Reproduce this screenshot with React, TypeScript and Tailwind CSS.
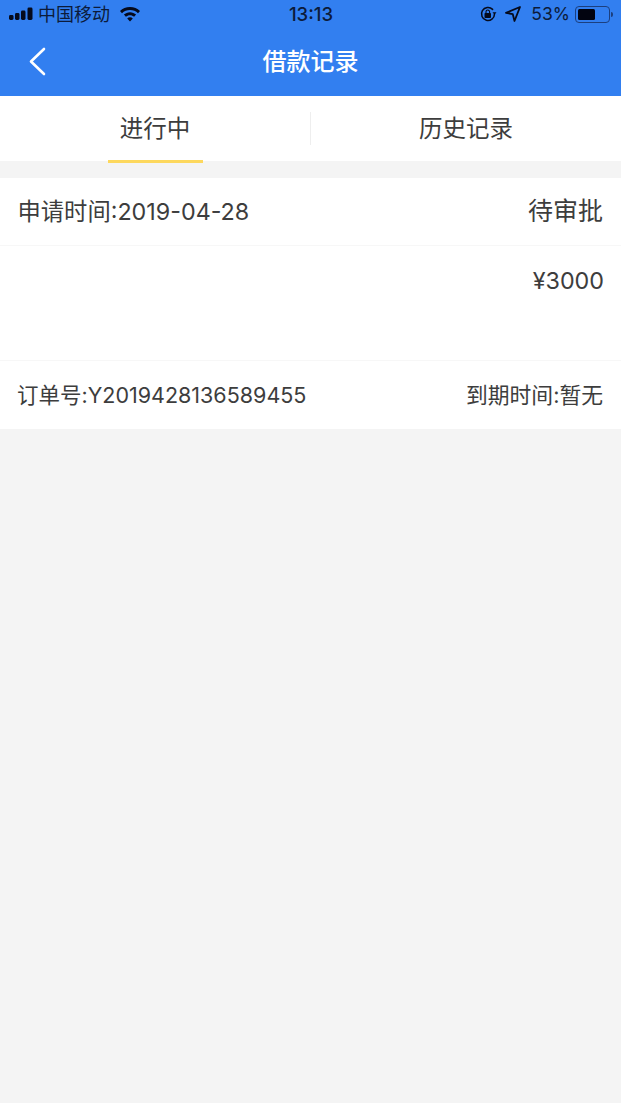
import React from "react";

const font = "font-['Inter','Noto_Sans_CJK_SC',sans-serif]";

function StatusBar() {
  return (
    <div className="flex h-[28px] items-center justify-between pl-[9px] pr-[8px] text-[#0c1b3a]">
      <div className="flex w-[200px] items-center">
        <svg width="25" height="14" viewBox="0 0 25 14" fill="#050a1c">
          <rect x="0" y="8" width="4.500" height="5" rx="1.400" />
          <rect x="6" y="6" width="4.500" height="7" rx="1.400" />
          <rect x="12" y="3.500" width="4.500" height="9.500" rx="1.400" />
          <rect x="18.500" y="0.500" width="5" height="12.500" rx="1.400" />
        </svg>
        <span className="ml-[4px] translate-y-[1px] text-[18px] leading-[20px]">中国移动</span>
        <svg className="ml-[9px]" width="22" height="16" viewBox="0 0 22 16" fill="#050a1c">
          <path d="M11 1C7 1 3.600 2.500 1 5l2 2.200C5.100 5.100 7.900 4 11 4s5.900 1.100 8 3.200L21 5C18.400 2.500 15 1 11 1z" />
          <path d="M11 6.200c-2.400 0-4.500.9-6.100 2.400l2 2.200c1.100-1 2.500-1.600 4.100-1.600s3 .6 4.100 1.600l2-2.200C15.500 7.100 13.400 6.200 11 6.200z" />
          <path d="M11 11.300c-1.100 0-2 .4-2.800 1.100L11 15.500l2.800-3.100c-.8-.7-1.700-1.100-2.800-1.100z" />
        </svg>
      </div>
      <span className="text-[18.500px] font-medium leading-[20px]">13:13</span>
      <div className="flex w-[200px] items-center justify-end">
        <svg width="18" height="18" viewBox="0 0 18 18" fill="none" stroke="#050a1c" strokeWidth="1.500">
          <path d="M15.500 9a6.500 6.500 0 1 1-1.900-4.600" strokeLinecap="round" />
          <path d="M17.500 7.200h-4l2 2.600z" fill="#050a1c" stroke="none" />
          <rect x="5.500" y="8" width="6.500" height="5" rx="0.800" fill="#050a1c" stroke="none" />
          <path d="M7 8V6.800a1.800 1.800 0 0 1 3.600 0V8" strokeWidth="1.100" />
        </svg>
        <svg className="ml-[8px]" width="16" height="16" viewBox="0 0 16 16" fill="none">
          <path d="M15 1 1 6.800l6.800 1.400L9.500 15z" stroke="#050a1c" strokeWidth="1.800" strokeLinejoin="round" />
        </svg>
        <span className="ml-[10px] text-[17.500px] leading-[20px]">53%</span>
        <div className="ml-[5px] flex h-[17px] w-[35px] items-center rounded-[4px] border border-[#1c3f7e] p-[2px]">
          <div className="h-full w-[17px] rounded-[1.500px] bg-[#020410]" />
        </div>
        <div className="ml-[1px] h-[5px] w-[2px] rounded-r-[2px] bg-[#1c3f7e]" />
      </div>
    </div>
  );
}

export default function App() {
  return (
    <div className={`${font} flex min-h-[1103px] w-full flex-col bg-[#f4f4f4] text-[#3d3d3d]`}>
      <header className="h-[96px] bg-[#327ff0]">
        <StatusBar />
        <div className="flex h-[68px] items-center justify-between pl-[27px] pr-[27px]">
          <svg width="22" height="32" viewBox="0 0 22 32" fill="none" stroke="#fff" strokeWidth="2.600" strokeLinecap="round" strokeLinejoin="round">
            <path d="M17 3 4 15.500 17 28" />
          </svg>
          <span className="text-[24px] font-medium leading-[32px] text-white">借款记录</span>
          <div className="w-[22px]" />
        </div>
      </header>

      <nav className="flex h-[65px] bg-white">
        <div className="relative my-[16px] flex w-[311px] items-center justify-center border-r border-[#eeeeee]">
          <span className="text-[23.500px] leading-[30px]">进行中</span>
          <div className="absolute left-[108px] top-[48px] h-[3px] w-[95px] bg-[#fdd85d]" />
        </div>
        <div className="my-[16px] flex flex-1 items-center justify-center">
          <span className="text-[23.500px] leading-[30px]">历史记录</span>
        </div>
      </nav>

      <section className="mt-[17px] bg-white">
        <div className="flex h-[68px] items-center justify-between border-b border-[#f7f7f7] pl-[17.500px] pr-[18px] pt-[1px]">
          <span className="text-[23.300px]">申请时间:2019-04-28</span>
          <span className="text-[25px]">待审批</span>
        </div>
        <div className="flex h-[115px] justify-end border-b border-[#f7f7f7] pr-[17px] pt-[19px]">
          <span className="text-[23.300px] leading-[32px]">¥3000</span>
        </div>
        <div className="flex h-[68px] items-center justify-between pl-[17px] pr-[18px]">
          <span className="text-[21.500px]">订单号:Y2019428136589455</span>
          <span className="text-[21.800px]">到期时间:暂无</span>
        </div>
      </section>
    </div>
  );
}
